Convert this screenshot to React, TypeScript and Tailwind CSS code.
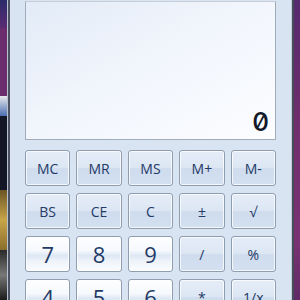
import React from 'react';

type Key = { label: string; kind: 'fn' | 'num' };

const rows: Key[][] = [
  [
    { label: 'MC', kind: 'fn' },
    { label: 'MR', kind: 'fn' },
    { label: 'MS', kind: 'fn' },
    { label: 'M+', kind: 'fn' },
    { label: 'M-', kind: 'fn' },
  ],
  [
    { label: 'BS', kind: 'fn' },
    { label: 'CE', kind: 'fn' },
    { label: 'C', kind: 'fn' },
    { label: '±', kind: 'fn' },
    { label: '√', kind: 'fn' },
  ],
  [
    { label: '7', kind: 'num' },
    { label: '8', kind: 'num' },
    { label: '9', kind: 'num' },
    { label: '/', kind: 'fn' },
    { label: '%', kind: 'fn' },
  ],
  [
    { label: '4', kind: 'num' },
    { label: '5', kind: 'num' },
    { label: '6', kind: 'num' },
    { label: '*', kind: 'fn' },
    { label: '1/x', kind: 'fn' },
  ],
];

const CalcKey: React.FC<{ k: Key }> = ({ k }) => {
  const isNum = k.kind === 'num';
  return (
    <button
      className={
        'h-[36px] rounded-[3px] border border-[#8f9db1] shadow-[inset_0_0_0_1px_rgba(255,255,255,0.75)] flex items-center justify-center text-[#243a66] font-["Open_Sans",sans-serif] ' +
        (isNum
          ? 'bg-[linear-gradient(to_bottom,#fdfeff_0%,#f6f9fd_40%,#dde7f4_55%,#eef3fa_70%,#fbfcfe_100%)] text-[22px]'
          : 'bg-[linear-gradient(to_bottom,#e4ecf7_0%,#dde7f4_48%,#cfdcee_52%,#d3e0f0_100%)] text-[14px]')
      }
    >
      {k.label}
    </button>
  );
};

export default function App() {
  return (
    <div className="w-[300px] h-[300px] overflow-hidden flex">
      {/* desktop behind the window, left */}
      <div className="w-[7px] flex flex-col">
        <div className="h-[28px] bg-[linear-gradient(to_bottom,#2c2c6a,#5b2b72)]" />
        <div className="h-[68px] bg-[#6c2d6e]" />
        <div className="h-[20px] bg-[linear-gradient(to_bottom,#e8e8ee,#4a6fb0)]" />
        <div className="h-[74px] bg-[#141826]" />
        <div className="h-[60px] bg-[linear-gradient(to_bottom,#6a5624,#c9a448,#8a6e2c)]" />
        <div className="flex-1 bg-[linear-gradient(to_bottom,#2a2a2a,#777,#1c1c1c)]" />
      </div>
      <div className="w-[1px] bg-[#b9c3cf]" />
      <div className="w-[2px] bg-[#4b5360]" />

      {/* window frame */}
      <div className="w-[281px] bg-[#d9e4f2] px-[15px]">
        <div className="mt-[1px] h-[139px] border border-[#a2acb9] border-t-[#c7ced8] bg-[linear-gradient(150deg,#e2ebf7_0%,#f1f5fc_45%,#fcfdff_100%)] flex items-end justify-end pr-[6px] pb-[3px]">
          <span className="text-[26px] leading-[28px] font-medium text-[#111827] font-['Inter',sans-serif] slashed-zero">
            0
          </span>
        </div>
        <div className="mt-[10px] flex flex-col gap-y-[7px]">
          {rows.map((row, i) => (
            <div key={i} className="grid grid-cols-5 gap-x-[6px]">
              {row.map((k) => (
                <CalcKey key={k.label} k={k} />
              ))}
            </div>
          ))}
        </div>
      </div>

      {/* desktop behind the window, right */}
      <div className="w-[1px] bg-[#c3ccd8]" />
      <div className="w-[2px] bg-[#464d5a]" />
      <div className="flex-1 bg-[linear-gradient(to_bottom,#552a6e,#6f2e6c_40%,#7a3272_80%,#5f2a66)]" />
    </div>
  );
}
